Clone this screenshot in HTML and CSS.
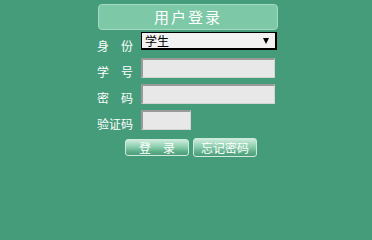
FILE: index.html
```html
<!DOCTYPE html>
<html lang="zh-CN">
<head>
<meta charset="utf-8">
<title>用户登录</title>
<link rel="stylesheet" href="styles.css">
</head>
<body>
<div class="panel">
  <div class="title">用户登录</div>
  <div class="form">
    <div class="label">身　份</div>
    <div class="select"><span class="sel-text">学生</span><span class="arrow"></span></div>
    <div class="label">学　号</div>
    <input class="field" type="text">
    <div class="label">密　码</div>
    <input class="field" type="password">
    <div class="label">验证码</div>
    <input class="field code" type="text">
  </div>
  <div class="buttons">
    <div class="btn login">登　录</div>
    <div class="btn forgot">忘记密码</div>
  </div>
</div>
</body>
</html>
```
FILE: styles.css
```css
html, body {
  margin: 0;
  padding: 0;
  background: #459c7a;
  font-family: "Noto Sans CJK SC", "DejaVu Sans", sans-serif;
}
.panel {
  margin-left: 97px;
  padding-top: 4px;
  width: 181px;
}
.title {
  margin-left: 1px;
  width: 180px;
  height: 26px;
  box-sizing: border-box;
  border: 1px solid #a6dbc3;
  border-radius: 4px;
  background: #7dc8a7;
  color: #ffffff;
  font-size: 15px;
  line-height: 24px;
  letter-spacing: 2px;
  text-align: center;
}
.form {
  margin-top: 2px;
  display: grid;
  grid-template-columns: 44px auto;
  grid-auto-rows: 20px;
  row-gap: 6px;
}
.label {
  align-self: end;
  color: #ffffff;
  font-size: 12px;
  line-height: 12px;
  height: 12px;
  white-space: nowrap;
}
.select {
  align-self: start;
  width: 136px;
  height: 18px;
  box-sizing: border-box;
  border-top: 1px solid #000;
  border-left: 1px solid #000;
  border-right: 2px solid #000;
  border-bottom: 2px solid #000;
  background: #f2f2f2;
  display: flex;
  align-items: center;
  padding-left: 3px;
  padding-right: 6px;
}
.sel-text {
  font-size: 12px;
  line-height: 12px;
  color: #000;
}
.arrow {
  margin-left: auto;
  width: 0;
  height: 0;
  border-left: 3.5px solid transparent;
  border-right: 3.5px solid transparent;
  border-top: 6px solid #000;
}
.field {
  display: block;
  margin: 0;
  padding: 0;
  width: 134px;
  height: 20px;
  box-sizing: border-box;
  background: #e8e8e8;
  border-top: 2px solid #9a9a9a;
  border-left: 2px solid #9a9a9a;
  border-right: 1px solid #d4d4d4;
  border-bottom: 1px solid #d4d4d4;
  outline: none;
}
.field.code {
  width: 50px;
}
.buttons {
  margin-top: 8px;
  margin-left: 28px;
  display: flex;
  align-items: center;
  gap: 4px;
}
.btn {
  width: 64px;
  box-sizing: border-box;
  border: 1px solid #cfeadd;
  border-radius: 3px;
  background: linear-gradient(#cdebdc, #8ccfaf 45%, #5aab86 80%, #4c9d79);
  color: #ffffff;
  font-size: 12px;
  text-align: center;
}
.login {
  height: 17px;
  line-height: 15px;
}
.forgot {
  height: 19px;
  line-height: 17px;
}
```
